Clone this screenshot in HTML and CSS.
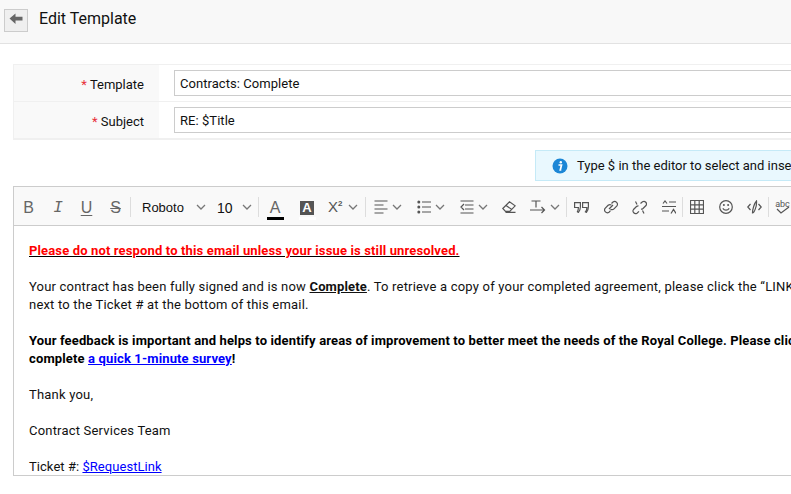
FILE: index.html
```html
<!DOCTYPE html>
<html lang="en">
<head>
<meta charset="utf-8">
<title>Edit Template</title>
<link rel="stylesheet" href="styles.css">
</head>
<body>
<div class="page">
  <header class="head">
    <button class="back" type="button" aria-label="Back">
      <svg width="14" height="12" viewBox="0 0 14 12"><path d="M.5 5.500 6.500.5v3.200h7v3.800h-7v3.500Z" fill="#666"/></svg>
    </button>
    <h1 class="title">Edit Template</h1>
  </header>

  <section class="form">
    <div class="row">
      <div class="label"><span class="req">*</span> Template</div>
      <div class="field"><div class="input">Contracts: Complete</div></div>
    </div>
    <div class="row row-last">
      <div class="label"><span class="req">*</span> Subject</div>
      <div class="field"><div class="input">RE: $Title</div></div>
    </div>
  </section>

  <div class="notice-wrap">
    <div class="notice">
      <svg class="info" width="16" height="16" viewBox="0 0 16 16"><circle cx="8" cy="8" r="7.500" fill="#1c87d6"/><circle cx="8.800" cy="4.300" r="1.200" fill="#fff"/><path d="M6.500 7h3l-1.200 5h1" fill="none" stroke="#fff" stroke-width="1.700"/></svg>
      <span>Type $ in the editor to select and insert variables into the template.</span>
    </div>
  </div>

  <section class="editor">
    <div class="toolbar">
      <span class="tool glyph">B</span>
      <span class="tool glyph gi">I</span>
      <span class="tool glyph gu">U</span>
      <span class="tool glyph gs">S</span>
      <span class="sep"></span>
      <span class="font-name">Roboto</span>
      <svg class="chev chev-font" width="10" height="6" viewBox="0 0 10 6"><path d="m1 1 4 4 4-4"/></svg>
      <span class="font-size">10</span>
      <svg class="chev chev-size" width="10" height="6" viewBox="0 0 10 6"><path d="m1 1 4 4 4-4"/></svg>
      <span class="sep sep-b"></span>

      <span class="tool tool-color"><span class="color-a">A</span><span class="color-bar"></span></span>
      <span class="tool tool-bg"><span class="bg-a">A</span><span class="bg-bar"></span></span>
      <span class="tool tool-sup"><span class="sup-x">X<sup>2</sup></span></span>
      <svg class="chev chev-s" width="10" height="6" viewBox="0 0 10 6"><path d="m1 1 4 4 4-4"/></svg>
      <span class="sep sep-c"></span>

      <span class="tool tool-n"><svg class="ico" width="14" height="14" viewBox="0 0 14 14"><path d="M.5 1h13M.5 5h9M.5 9h13M.5 13h9"/></svg></span>
      <svg class="chev chev-g" width="10" height="6" viewBox="0 0 10 6"><path d="m1 1 4 4 4-4"/></svg>
      <span class="tool tool-n tool-next"><svg class="ico" width="14" height="14" viewBox="0 0 14 14"><path d="M5 2h9M5 7h9M5 12h9"/><circle class="fill" cx="1.800" cy="2" r="1.500"/><circle class="fill" cx="1.800" cy="7" r="1.500"/><circle class="fill" cx="1.800" cy="12" r="1.500"/></svg></span>
      <svg class="chev chev-g" width="10" height="6" viewBox="0 0 10 6"><path d="m1 1 4 4 4-4"/></svg>
      <span class="tool tool-n tool-next"><svg class="ico" width="14" height="14" viewBox="0 0 14 14"><path d="M.5 1h13M5 5h8.500M5 9h8.500M.5 13h13M4 4 1 7l3 3"/></svg></span>
      <svg class="chev chev-g" width="10" height="6" viewBox="0 0 10 6"><path d="m1 1 4 4 4-4"/></svg>
      <span class="tool tool-era"><svg class="ico" width="14" height="12" viewBox="0 0 14 12"><path d="M.8 7.500 7.500.8l5.700 4-5.500 5.500H3.500ZM4 4.500l5.500 3.800M3.500 11.300h10"/></svg></span>
      <span class="tool tool-dir"><svg class="ico" width="16" height="14" viewBox="0 0 16 14"><path d="M1.500 1h9M6 1v6.500M0 10h14.500M11.500 7l3 3-3 3"/></svg></span>
      <svg class="chev chev-d" width="10" height="6" viewBox="0 0 10 6"><path d="m1 1 4 4 4-4"/></svg>
      <span class="sep sep-d"></span>

      <span class="tool"><svg class="ico" width="15" height="11" viewBox="0 0 15 11"><path d="M.6.600h5.800V5c0 2-.8 3.800-2 5.400l-1-.6C4 8.500 4.400 7 4.400 5.500H.6ZM8.600.600h5.800V5c0 2-.8 3.800-2 5.400l-1-.6c1.100-1.300 1.500-2.800 1.500-4.300H8.600Z"/></svg></span>
      <span class="tool"><svg class="ico" width="14" height="14" viewBox="0 0 14 14"><path d="M5 9 9 5M7.500 3.500 9 2a2.800 2.800 0 0 1 3.900 3.900L10 8.800a2.800 2.800 0 0 1-3.500.4M7.400 5a2.800 2.800 0 0 0-3.300.3L1.100 8.300a2.800 2.800 0 0 0 3.900 3.900L6.500 10.700"/></svg></span>
      <span class="tool"><svg class="ico" width="15" height="15" viewBox="0 0 15 15"><path d="M8.500 3.500 10.500 1.800a2.600 2.600 0 0 1 3.500 3.700L11 8.500a2.600 2.600 0 0 1-2 .7M6.500 5.800a2.600 2.600 0 0 0-2 .7L1.500 9.500a2.600 2.600 0 0 0 3.500 3.700l2-1.800M3.500 1.500 5 4.500M10.500 10.500 12 13.500"/></svg></span>
      <span class="tool"><svg class="ico" width="14" height="14" viewBox="0 0 14 14"><path d="M1 3.500 3 1l2 2.500M0 6.500h14M7 2h7M0 11h7M9 13.500l2.500-4 2.500 4"/></svg></span>
      <span class="sep sep-e"></span>
      <span class="tool"><svg class="ico" width="14" height="14" viewBox="0 0 14 14"><path d="M.5.500h13v13H.5ZM.5 4.800h13M.5 9.200h13M4.800.500v13M9.200.500v13"/></svg></span>
      <span class="tool"><svg class="ico" width="14" height="14" viewBox="0 0 14 14"><circle cx="7" cy="7" r="6.300"/><path d="M3.800 8.300c1.600 2.400 4.800 2.400 6.400 0"/><circle class="fill" cx="4.900" cy="5" r="1"/><circle class="fill" cx="9.100" cy="5" r="1"/></svg></span>
      <span class="tool"><svg class="ico" width="15" height="14" viewBox="0 0 15 14"><path d="M3.500 4 .8 7l2.700 3M11.500 4l2.700 3-2.700 3M9.500 1C7.500 3 5.500 9 5.500 13c1.700 0 4.500-7 4-12Z"/></svg></span>
      <span class="sep sep-f"></span>
      <span class="tool tool-abc"><span class="abc">abc</span><svg class="ico abc-check" width="14" height="9" viewBox="0 0 14 9"><path d="m1 3 4 4 8-6"/></svg></span>
    </div>
    <div class="content">
      <p class="line warn">Please do not respond to this email unless your issue is still unresolved.</p>
      <p class="line gap">Your contract has been fully signed and is now <strong class="under">Complete</strong>. To retrieve a copy of your completed agreement, please click the “LINK” link<br>next to the Ticket # at the bottom of this email.</p>
      <p class="line gap bold">Your feedback is important and helps to identify areas of improvement to better meet the needs of the Royal College. Please click here to<br>complete <a class="link" href="#">a quick 1-minute survey</a>!</p>
      <p class="line gap">Thank you,</p>
      <p class="line gap">Contract Services Team</p>
      <p class="line gap ticket">Ticket #: <a class="link" href="#">$RequestLink</a></p>
    </div>
  </section>
</div>
</body>
</html>
```
FILE: styles.css
```css
* { box-sizing: border-box; }
html, body { margin: 0; padding: 0; overflow: hidden; background: #fff; }
body { width: 791px; height: 494px; font-family: Roboto, sans-serif; font-size: 13px; color: #111; }
.page { width: 1100px; height: 494px; overflow: hidden; }

.head { height: 44px; background: #f8f8f8; border-bottom: 1px solid #e2e2e2; display: flex; align-items: center; padding: 0 0 8px 4px; }
.back { width: 24px; height: 23px; margin-top: 6px; padding: 0 0 4px; background: #efefef; border: 1px solid #ccc; display: flex; align-items: center; justify-content: center; }
.title { margin: 0 0 0 11px; font-size: 16px; font-weight: 400; line-height: 20px; padding-top: 3px; color: #111; }

.form { margin: 20px 0 0 13px; width: 1070px; background: #fff; border: 1px solid #f0f0f0; border-width: 1px 1px 2px; }
.row { display: flex; height: 37px; border-bottom: 1px solid #f0f0f0; }
.row-last { border-bottom: 0; height: 36px; }
.label { width: 145px; background: #f9f9f9; text-align: right; padding: 12px 15px 0 0; line-height: 16px; }
.req { color: #e8303a; }
.field { flex: 1; padding: 5px 0 0 15px; }
.input { height: 26px; border: 1px solid #ccc; background: #fff; padding: 1px 5px 0; line-height: 24px; letter-spacing: .05px; }

.notice-wrap { margin: 10px 0 0 535px; }
.notice { display: flex; align-items: center; gap: 9px; width: 480px; height: 31px; padding-left: 16px; background: #e9f8fe; border: 1px solid #c5eaf7; }
.info { flex: none; }

.editor { margin: 5px 0 0 13px; width: 1070px; height: 290px; border: 1px solid #ccc; overflow: hidden; }
.toolbar { height: 39px; padding-top: 2px; background: #f9f9f9; border-bottom: 1px solid #ccc; display: flex; align-items: center; }
.tool { flex: none; width: 29px; height: 22px; display: flex; align-items: center; justify-content: center; position: relative; color: #666; }
.sep { flex: none; width: 1px; height: 20px; background: #ddd; }
.glyph { font-family: "Liberation Sans", sans-serif; font-size: 16px; padding-top: 2px; }
.gi { font-family: "Liberation Mono", monospace; font-style: italic; padding-left: 1px; }
.gu { text-decoration: underline; text-underline-offset: 2px; }
.gs { text-decoration: line-through; }
.font-name { font-family: "Liberation Sans", sans-serif; font-size: 13px; color: #111; width: 43px; margin-left: 11px; }
.font-size { font-family: "Liberation Sans", sans-serif; font-size: 14px; color: #111; margin-left: 11px; width: 15px; padding-top: 2px; }
.chev { flex: none; fill: none; stroke: #777; stroke-width: 1.300; }
.chev-font { margin-left: 11px; }
.chev-size { margin-left: 10px; }
.sep-b { margin-left: 6px; }
.tool-color, .tool-bg { width: 32px; height: 24px; margin-top: 8px; flex-direction: column; justify-content: flex-start; }
.color-a { font-family: "Liberation Sans", sans-serif; font-size: 16px; line-height: 17px; }
.color-bar { width: 17px; height: 3px; background: #000; margin-top: 1px; }
.bg-a { width: 14px; height: 14px; margin-top: 2px; background: #555; color: #fff; font: 700 13px/14px "Liberation Sans", sans-serif; text-align: center; }
.bg-bar { width: 17px; height: 3px; background: #fff; margin-top: 2px; }
.tool-sup { width: 29px; justify-content: flex-start; padding-left: 5px; }
.sup-x { font: 15px/16px "Liberation Sans", sans-serif; color: #555; }
.sup-x sup { font-size: 8px; font-weight: 700; line-height: 0; vertical-align: 6px; }
.chev-s { margin-left: -4px; }
.sep-c { margin-left: 7px; }
.ico { fill: none; stroke: #555; stroke-width: 1.200; display: block; flex: none; }
.ico .fill { fill: #555; stroke: none; }
.tool-n { width: 30px; }
.chev-g { margin-left: -4px; }
.tool-next { margin-left: 7px; }
.tool-era { width: 30px; margin-left: 6px; }
.tool-dir { width: 28px; }
.chev-d { margin-left: -2px; }
.sep-d { margin-left: 6px; }
.sep-e, .sep-f { margin: 0 -1px; }
.tool-abc { flex-direction: column; }
.abc { font-size: 9px; line-height: 9px; color: #555; }
.abc-check { margin-top: -3px; }

.content { padding: 16px 0 0 15px; line-height: 18px; letter-spacing: .2px; }
.line { margin: 0; white-space: nowrap; }
.gap { margin-top: 18px; }
.warn { color: #f00; font-weight: 700; letter-spacing: .14px; text-decoration: underline; text-decoration-color: #000; }
.bold { font-weight: 700; color: #000; letter-spacing: .14px; }
.under { text-decoration: underline; letter-spacing: .14px; }
.ticket { letter-spacing: .05px; }
.link { color: #00f; text-decoration: underline; }
```
